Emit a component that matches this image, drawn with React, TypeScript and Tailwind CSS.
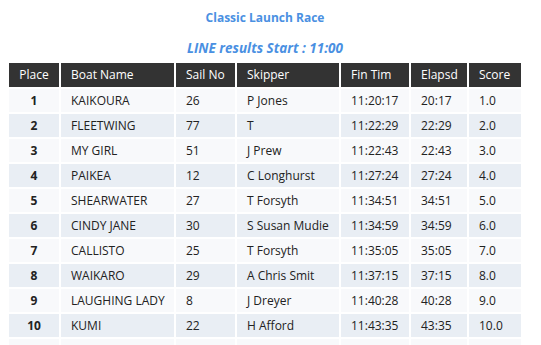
import React from "react";

const rows = [
  ["1", "KAIKOURA", "26", "P Jones", "11:20:17", "20:17", "1.0"],
  ["2", "FLEETWING", "77", "T", "11:22:29", "22:29", "2.0"],
  ["3", "MY GIRL", "51", "J Prew", "11:22:43", "22:43", "3.0"],
  ["4", "PAIKEA", "12", "C Longhurst", "11:27:24", "27:24", "4.0"],
  ["5", "SHEARWATER", "27", "T Forsyth", "11:34:51", "34:51", "5.0"],
  ["6", "CINDY JANE", "30", "S Susan Mudie", "11:34:59", "34:59", "6.0"],
  ["7", "CALLISTO", "25", "T Forsyth", "11:35:05", "35:05", "7.0"],
  ["8", "WAIKARO", "29", "A Chris Smit", "11:37:15", "37:15", "8.0"],
  ["9", "LAUGHING LADY", "8", "J Dreyer", "11:40:28", "40:28", "9.0"],
  ["10", "KUMI", "22", "H Afford", "11:43:35", "43:35", "10.0"],
  ["", "", "", "", "", "", ""],
];

const headers = ["Place", "Boat Name", "Sail No", "Skipper", "Fin Tim", "Elapsd", "Score"];

export default function App() {
  return (
    <div
      className="w-[541px] h-[345px] overflow-hidden bg-white text-[#222]"
      style={{ fontFamily: '"Open Sans", sans-serif' }}
    >
      <div className="ml-[9px] w-[512px]">
        <div className="pt-[8px] text-center text-[12px] font-bold leading-[20px] text-[#4a90e2]">
          Classic Launch Race
        </div>
        <div className="mt-[10px] text-center text-[13.5px] font-bold italic leading-[20px] text-[#4a90e2]">
          LINE results Start : 11:00
        </div>
        <div className="mt-[5px] grid grid-cols-[50px_113px_59px_102px_68px_56px_52px] gap-[2px] text-[12px]">
          {headers.map((h, i) => (
            <div
              key={h}
              className={`h-[24px] flex items-center bg-[#333333] text-white ${
                i === 0 ? "justify-center" : "pl-[10px]"
              }`}
            >
              {h}
            </div>
          ))}
          {rows.map((r, ri) =>
            r.map((c, ci) => (
              <div
                key={`${ri}-${ci}`}
                className={`h-[23px] flex items-center ${
                  ri % 2 === 0 ? "bg-[#f8f9fb]" : "bg-[#e9eef4]"
                } ${ci === 0 ? "justify-center font-bold" : "pl-[10px]"}`}
              >
                {c}
              </div>
            ))
          )}
        </div>
      </div>
    </div>
  );
}
